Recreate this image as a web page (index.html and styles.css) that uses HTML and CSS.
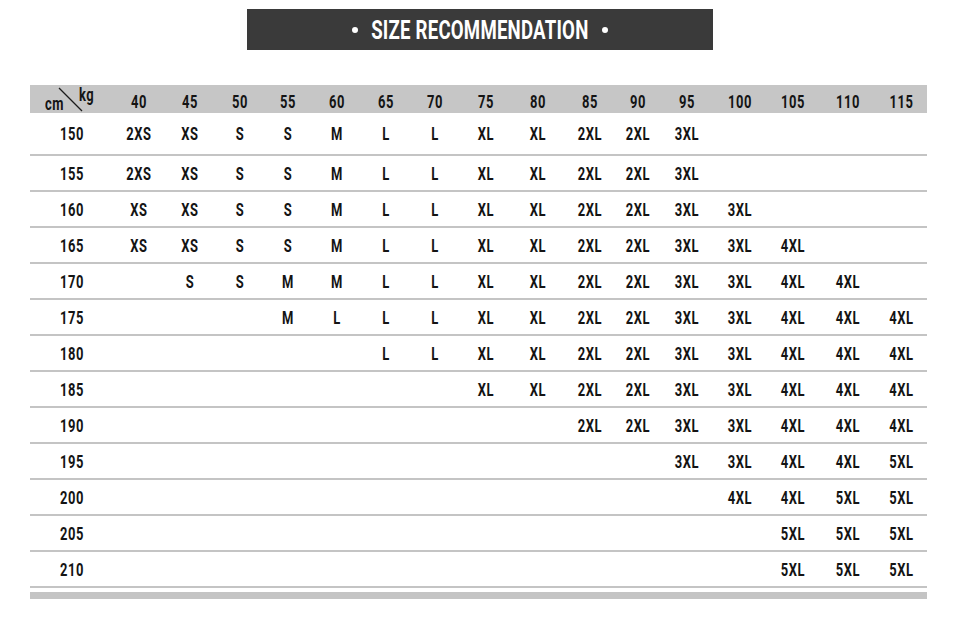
FILE: index.html
```html
<!DOCTYPE html>
<html>
<head>
<meta charset="utf-8">
<link rel="stylesheet" href="styles.css">
</head>
<body>
<div class="banner"><span class="dot"></span><span class="title"><span class="title-text">SIZE RECOMMENDATION</span></span><span class="dot"></span></div>
<div class="table">
  <div class="row head">
    <div class="corner"><span class="cm">cm</span><svg class="slash" width="84" height="28" viewBox="0 0 84 28"><line x1="29" y1="3" x2="52" y2="26" stroke="#1a1a1a" stroke-width="1.3"/></svg><span class="kg">kg</span></div>
    <div>40</div><div>45</div><div>50</div><div>55</div><div>60</div><div>65</div><div>70</div><div>75</div><div>80</div><div>85</div><div>90</div><div>95</div><div>100</div><div>105</div><div>110</div><div>115</div>
  </div>
  <div class="row first"><div>150</div><div>2XS</div><div>XS</div><div>S</div><div>S</div><div>M</div><div>L</div><div>L</div><div>XL</div><div>XL</div><div>2XL</div><div>2XL</div><div>3XL</div><div></div><div></div><div></div><div></div></div>
  <div class="row"><div>155</div><div>2XS</div><div>XS</div><div>S</div><div>S</div><div>M</div><div>L</div><div>L</div><div>XL</div><div>XL</div><div>2XL</div><div>2XL</div><div>3XL</div><div></div><div></div><div></div><div></div></div>
  <div class="row"><div>160</div><div>XS</div><div>XS</div><div>S</div><div>S</div><div>M</div><div>L</div><div>L</div><div>XL</div><div>XL</div><div>2XL</div><div>2XL</div><div>3XL</div><div>3XL</div><div></div><div></div><div></div></div>
  <div class="row"><div>165</div><div>XS</div><div>XS</div><div>S</div><div>S</div><div>M</div><div>L</div><div>L</div><div>XL</div><div>XL</div><div>2XL</div><div>2XL</div><div>3XL</div><div>3XL</div><div>4XL</div><div></div><div></div></div>
  <div class="row"><div>170</div><div></div><div>S</div><div>S</div><div>M</div><div>M</div><div>L</div><div>L</div><div>XL</div><div>XL</div><div>2XL</div><div>2XL</div><div>3XL</div><div>3XL</div><div>4XL</div><div>4XL</div><div></div></div>
  <div class="row"><div>175</div><div></div><div></div><div></div><div>M</div><div>L</div><div>L</div><div>L</div><div>XL</div><div>XL</div><div>2XL</div><div>2XL</div><div>3XL</div><div>3XL</div><div>4XL</div><div>4XL</div><div>4XL</div></div>
  <div class="row"><div>180</div><div></div><div></div><div></div><div></div><div></div><div>L</div><div>L</div><div>XL</div><div>XL</div><div>2XL</div><div>2XL</div><div>3XL</div><div>3XL</div><div>4XL</div><div>4XL</div><div>4XL</div></div>
  <div class="row"><div>185</div><div></div><div></div><div></div><div></div><div></div><div></div><div></div><div>XL</div><div>XL</div><div>2XL</div><div>2XL</div><div>3XL</div><div>3XL</div><div>4XL</div><div>4XL</div><div>4XL</div></div>
  <div class="row"><div>190</div><div></div><div></div><div></div><div></div><div></div><div></div><div></div><div></div><div></div><div>2XL</div><div>2XL</div><div>3XL</div><div>3XL</div><div>4XL</div><div>4XL</div><div>4XL</div></div>
  <div class="row"><div>195</div><div></div><div></div><div></div><div></div><div></div><div></div><div></div><div></div><div></div><div></div><div></div><div>3XL</div><div>3XL</div><div>4XL</div><div>4XL</div><div>5XL</div></div>
  <div class="row"><div>200</div><div></div><div></div><div></div><div></div><div></div><div></div><div></div><div></div><div></div><div></div><div></div><div></div><div>4XL</div><div>4XL</div><div>5XL</div><div>5XL</div></div>
  <div class="row"><div>205</div><div></div><div></div><div></div><div></div><div></div><div></div><div></div><div></div><div></div><div></div><div></div><div></div><div></div><div>5XL</div><div>5XL</div><div>5XL</div></div>
  <div class="row"><div>210</div><div></div><div></div><div></div><div></div><div></div><div></div><div></div><div></div><div></div><div></div><div></div><div></div><div></div><div>5XL</div><div>5XL</div><div>5XL</div></div>
  <div class="bottom-bar"></div>
</div>
</body>
</html>
```
FILE: styles.css
```css
html, body {
  margin: 0;
  padding: 0;
  background: #ffffff;
}
body {
  width: 960px;
  height: 631px;
  font-family: Roboto, "Liberation Sans", sans-serif;
  font-weight: bold;
  color: #141414;
  padding-top: 9px;
  box-sizing: border-box;
}
.banner {
  width: 466px;
  height: 41px;
  margin: 0 auto;
  background: #3a3a3a;
  display: flex;
  align-items: center;
  justify-content: center;
  gap: 15px;
  color: #ffffff;
}
.dot {
  width: 6px;
  height: 6px;
  border-radius: 50%;
  background: #ffffff;
}
.title {
  width: 214px;
  display: flex;
  justify-content: center;
  white-space: nowrap;
}
.title-text {
  font-size: 25.5px;
  line-height: 1;
  padding-top: 2px;
  letter-spacing: 0.3px;
  transform: scaleX(0.73);
}
.table {
  margin: 35px 0 0 30px;
  width: 897px;
}
.row {
  display: grid;
  grid-template-columns: 84px 50px 52px 48px 48px 50px 48px 50px 52px 52px 52px 44px 54px 52px 54px 56px 51px;
  height: 36px;
  border-bottom: 2px solid #c4c4c4;
  box-sizing: border-box;
  font-size: 18px;
}
.row > div {
  display: flex;
  align-items: center;
  justify-content: center;
  letter-spacing: 0.8px;
  white-space: nowrap;
  transform: scaleX(0.72);
}
.row.head {
  height: 28px;
  border-bottom: none;
  background: #c6c6c6;
  font-size: 18px;
}
.row.head > div {
  padding-top: 5px;
}
.row.first {
  height: 43px;
}
.row.head > .corner {
  position: relative;
  padding: 0;
  transform: none;
}
.cm {
  position: absolute;
  left: 15px;
  top: 8px;
  font-size: 18px;
  transform: scaleX(0.72);
  transform-origin: left center;
}
.kg {
  position: absolute;
  left: 49px;
  top: -1px;
  font-size: 18px;
  transform: scaleX(0.72);
  transform-origin: left center;
}
.slash {
  position: absolute;
  left: 0;
  top: 0;
}
.bottom-bar {
  height: 7px;
  background: #c4c4c4;
  margin-top: 4px;
}
```
